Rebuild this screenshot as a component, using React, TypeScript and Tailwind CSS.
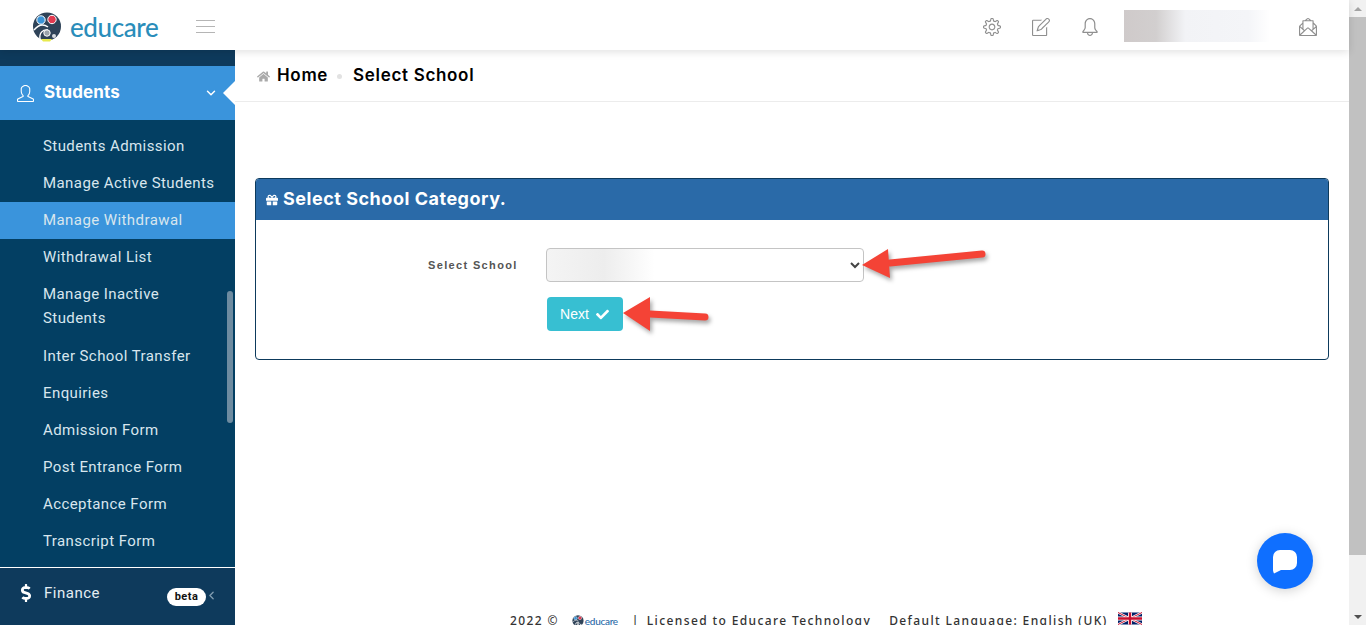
import React from "react";
import { ChevronDown, ChevronLeft } from "lucide-react";
import { FaCheck, FaDollarSign, FaGift, FaHome } from "react-icons/fa";
import { SlBell, SlEnvolopeLetter, SlNote, SlSettings, SlUser } from "react-icons/sl";

const subItems = [
  { label: "Students Admission" },
  { label: "Manage Active Students" },
  { label: "Manage Withdrawal", active: true },
  { label: "Withdrawal List" },
  { label: "Manage Inactive Students", wrap: true },
  { label: "Inter School Transfer" },
  { label: "Enquiries" },
  { label: "Admission Form" },
  { label: "Post Entrance Form" },
  { label: "Acceptance Form" },
  { label: "Transcript Form" },
];

function LogoMark({ size }: { size: number }) {
  return (
    <svg width={size} height={size} viewBox="0 0 30 30">
      <circle cx="15" cy="14.5" r="14" fill="#2f4358" />
      <circle cx="9" cy="8" r="4.2" fill="#3a93d6" stroke="#fff" strokeWidth="1" />
      <circle cx="20" cy="7.5" r="4.2" fill="#e23a50" stroke="#fff" strokeWidth="1" />
      <path d="M2 18c5-6 10-6 14-3M8 27c-1-6 3-10 8-9" fill="none" stroke="#fff" strokeWidth="1.4" />
      <circle cx="15" cy="21" r="3.2" fill="#9aa3ab" stroke="#fff" strokeWidth="1" />
      <path d="M9 27h11l-2 2.6h-7z" fill="#e8ea4e" />
      <circle cx="22" cy="24" r="2" fill="#d7dbe0" />
    </svg>
  );
}

function Header() {
  return (
    <header className="relative z-10 flex h-[50px] shrink-0 items-center bg-white pt-[3px] shadow-[0_2px_8px_rgba(0,0,0,0.12)]">
      <div className="flex w-[235px] items-center pl-[32px]">
        <LogoMark size={30} />
        <span className="ml-[8px] font-['Lato',sans-serif] text-[26px] font-medium leading-none tracking-[-0.4px] text-[#2a8dba]">educare</span>
        <div className="ml-[38px] flex w-[19px] flex-col gap-[5px]">
          <div className="h-px bg-[#b5b5b5]" />
          <div className="h-px bg-[#b5b5b5]" />
          <div className="h-px bg-[#b5b5b5]" />
        </div>
      </div>
      <div className="ml-auto flex items-center text-[#8f8f8f]">
        <SlSettings size={18} />
        <SlNote size={18} className="ml-[31px]" />
        <SlBell size={18} className="ml-[31px]" />
        <div className="ml-[25px] -mt-[1px] h-[32px] w-[146px] bg-[linear-gradient(90deg,#cfcaca_0%,#d2cfcf_22%,#f2f3f6_42%,#f4f5f8_85%,#ffffff_100%)]" />
        <SlEnvolopeLetter size={18} className="ml-[29px] mr-[32px]" />
      </div>
    </header>
  );
}

function Sidebar() {
  return (
    <aside className="relative flex w-[235px] shrink-0 flex-col overflow-hidden bg-[#0e3a5c] font-['Roboto',sans-serif]">
      <div className="h-[16px] shrink-0" />
      <div className="relative flex h-[54px] shrink-0 items-center bg-[#3a94dc] pl-[17px] text-white">
        <SlUser size={17} />
        <span className="ml-[10px] font-['Inter',sans-serif] text-[17px] font-bold tracking-[0.1px]">Students</span>
        <ChevronDown size={14} strokeWidth={2.5} className="ml-auto mr-[17px]" />
        <div className="absolute right-0 top-[15px] h-0 w-0 border-y-[12px] border-r-[12px] border-y-transparent border-r-white" />
      </div>
      <div className="relative h-[447px] shrink-0 bg-[#033f63] pt-[8px]">
        {subItems.map((item) => (
          <div
            key={item.label}
            className={`flex items-center pl-[43px] text-[15px] tracking-[0.42px] text-[#d8e6ee] ${
              item.wrap ? "h-[62px] pb-[3px] pr-[40px] leading-[24px]" : "h-[37px]"
            } ${item.active ? "bg-[#3a94dc]" : ""}`}
          >
            {item.label}
          </div>
        ))}
        <div className="absolute right-[2px] top-[171px] h-[132px] w-[6px] rounded-full bg-[#6d8ba0]" />
      </div>
      <div className="h-px shrink-0 bg-white" />
      <div className="relative flex h-[50px] shrink-0 items-center pl-[17px] text-[#e4edf3]">
        <FaDollarSign size={18} className="text-white" />
        <span className="ml-[9px] text-[15px] tracking-[0.5px]">Finance</span>
        <span className="absolute left-[167px] top-[20px] flex h-[18px] w-[39px] items-center justify-center rounded-full bg-white text-[11px] font-bold tracking-[0.5px] text-[#111]">
          beta
        </span>
        <ChevronLeft size={13} strokeWidth={2.5} className="absolute left-[205px] top-[21px] text-[#7f9bb0]" />
      </div>
    </aside>
  );
}

function Arrow({ className, d, head }: { className: string; d: string; head: string }) {
  return (
    <svg className={`absolute drop-shadow-[2px_3px_2px_rgba(0,0,0,0.35)] ${className}`} fill="none">
      <path d={d} stroke="#f44336" strokeWidth="7" strokeLinecap="round" />
      <polygon points={head} fill="#f44336" />
    </svg>
  );
}

function Card() {
  return (
    <section className="mt-[76px] h-[182px] shrink-0 overflow-hidden rounded-[4px] border border-[#0d3a5c]">
      <div className="flex h-[41px] items-center bg-[#2a6aa8] pb-[3px] pl-[10px] text-white">
        <FaGift size={12} className="mt-[3px]" />
        <span className="ml-[5px] font-['Inter',sans-serif] text-[18px] font-bold tracking-[0.52px]">Select School Category.</span>
      </div>
      <div className="flex flex-col pl-[172px] pt-[28px]">
        <div className="flex items-center">
          <label className="w-[89px] whitespace-nowrap font-['Liberation_Sans',sans-serif] text-[11px] font-bold tracking-[1.35px] text-[#555]">
            Select School
          </label>
          <select className="ml-[29px] h-[34px] w-[318px] rounded-[4px] border border-[#c4c4c4] bg-[linear-gradient(90deg,#f4f4f4_0%,#ededed_18%,#ffffff_34%)] text-[#444]" />
        </div>
        <button className="ml-[119px] mt-[15px] flex h-[34px] w-[76px] items-center justify-center gap-[7px] rounded-[4px] bg-[#37bfd2] pr-px font-['Liberation_Sans',sans-serif] text-[14px] text-white">
          Next
          <FaCheck size={13} />
        </button>
      </div>
    </section>
  );
}

function Footer() {
  return (
    <footer className="mt-[252px] flex shrink-0 items-center pl-[275px] font-['Noto_Sans',sans-serif] text-[12px] font-medium leading-[16px] tracking-[1.38px] text-[#333]">
      <span>2022 ©</span>
      <span className="ml-[13px] flex items-center">
        <LogoMark size={12} />
        <span className="ml-px font-['Lato',sans-serif] text-[10px] tracking-[-0.3px] text-[#2a6aa8]">educare</span>
      </span>
      <span className="ml-[14px]">|</span>
      <span className="ml-[7px]">Licensed to Educare Technology</span>
      <span className="ml-[18px]">Default Language: English (UK)</span>
      <svg width="24" height="13" viewBox="0 0 60 30" className="mb-[5px] ml-[10px]">
        <rect width="60" height="30" fill="#012169" />
        <path d="M0 0l60 30M60 0L0 30" stroke="#fff" strokeWidth="6" />
        <path d="M0 0l60 30M60 0L0 30" stroke="#c8102e" strokeWidth="2.5" />
        <path d="M30 0v30M0 15h60" stroke="#fff" strokeWidth="10" />
        <path d="M30 0v30M0 15h60" stroke="#c8102e" strokeWidth="6" />
      </svg>
    </footer>
  );
}

function Scrollbar() {
  return (
    <div className="flex w-[17px] shrink-0 flex-col items-center bg-[#f1f1f1]">
      <div className="flex h-[17px] items-center justify-center">
        <div className="h-0 w-0 border-x-[4px] border-b-[4px] border-x-transparent border-b-[#a3a3a3]" />
      </div>
      <div className="h-[538px] w-full bg-[#c1c1c1]" />
      <div className="mt-auto flex h-[17px] items-center justify-center">
        <div className="h-0 w-0 border-x-[4px] border-t-[4px] border-x-transparent border-t-[#505050]" />
      </div>
    </div>
  );
}

export default function App() {
  return (
    <div className="relative flex h-[625px] w-[1366px] overflow-hidden bg-white">
      <div className="flex min-w-0 flex-1 flex-col">
        <Header />
        <div className="flex min-h-0 flex-1">
          <Sidebar />
          <main className="flex min-w-0 flex-1 flex-col">
            <div className="flex h-[52px] shrink-0 items-center border-b border-[#ececec] pl-[22px] pt-px font-['Inter',sans-serif] text-[17px] font-semibold tracking-[0.68px] text-black">
              <FaHome size={13} className="text-[#aaa]" />
              <span className="ml-[7px]">Home</span>
              <span className="ml-[9px] h-[5px] w-[5px] rounded-full bg-[#e2e2e2]" />
              <span className="ml-[11px]">Select School</span>
            </div>
            <div className="px-[20px]">
              <Card />
            </div>
            <Footer />
          </main>
        </div>
      </div>
      <Scrollbar />

      {/* annotation arrows drawn over the screenshot */}
      <Arrow
        className="left-[860px] top-[240px] h-[45px] w-[135px]"
        d="M30 23L122 14"
        head="2,25 28,9 30,38"
      />
      <Arrow
        className="left-[620px] top-[294px] h-[40px] w-[100px]"
        d="M30 20L85 23"
        head="3,19 30,3 30,37"
      />

      <button className="absolute left-[1257px] top-[533px] flex h-[56px] w-[56px] items-center justify-center rounded-full bg-[#0f6fff] shadow-[0_2px_12px_rgba(0,0,0,0.18)]">
        <svg width="26" height="25" viewBox="0 0 26 25">
          <path d="M8 1h10a7 7 0 0 1 7 7v6a7 7 0 0 1-7 7H9l-7 3.4c-.4-1-1-2-1-3.4V8a7 7 0 0 1 7-7z" fill="#fff" />
        </svg>
      </button>
    </div>
  );
}
